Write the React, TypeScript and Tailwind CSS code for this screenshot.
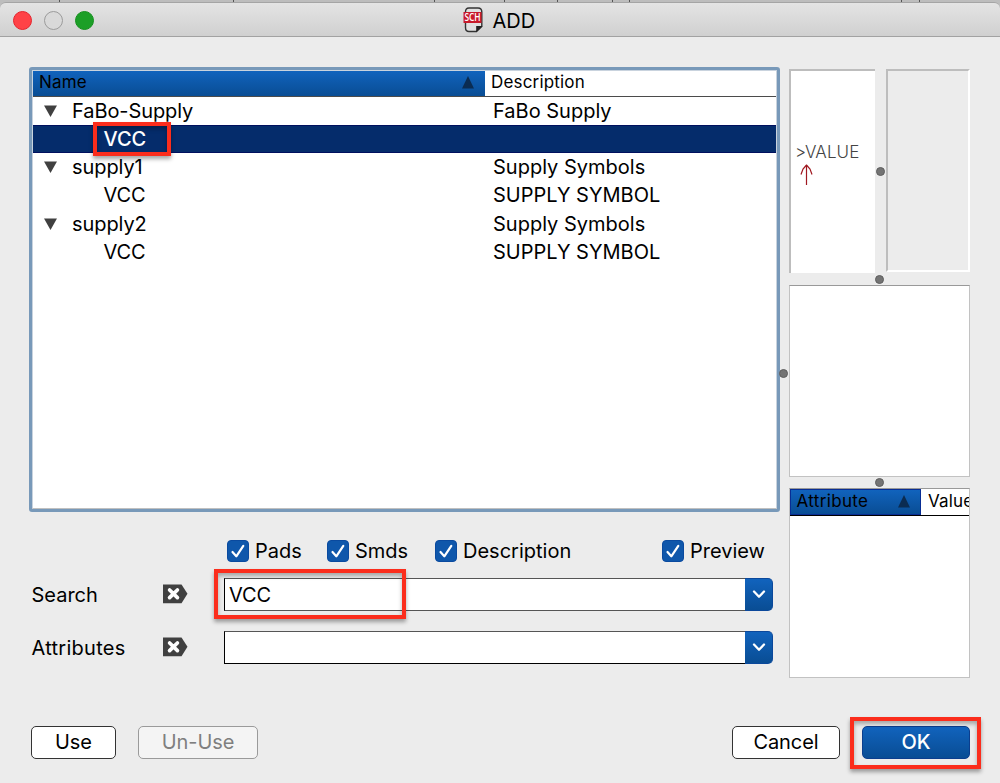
import React from "react";

const rows = [
  { name: "FaBo-Supply", desc: "FaBo Supply", group: true },
  { name: "VCC", desc: "", selected: true },
  { name: "supply1", desc: "Supply Symbols", group: true },
  { name: "VCC", desc: "SUPPLY SYMBOL" },
  { name: "supply2", desc: "Supply Symbols", group: true },
  { name: "VCC", desc: "SUPPLY SYMBOL" },
];

const ticks = [59, 233, 434, 504, 557, 612, 629, 901, 919];

function Check({ label, className }: { label: string; className: string }) {
  return (
    <label className={`flex items-center ${className}`}>
      <svg width="22" height="22" viewBox="0 0 22 22" className="mr-[6px] shrink-0">
        <rect x="0.5" y="0.5" width="21" height="21" rx="3.5" fill="#0f57ab" stroke="#0a4a9f" />
        <path d="M5.5 12 L9.3 16.3 L16.3 5.8" fill="none" stroke="#fff" strokeWidth="2.2" strokeLinecap="round" strokeLinejoin="round" />
      </svg>
      <span className="whitespace-nowrap tracking-[0px]">{label}</span>
    </label>
  );
}

function ClearIcon() {
  return (
    <svg width="25" height="20" viewBox="0 0 25 20" className="-mt-px">
      <path d="M0 0.5 H18.5 L24.5 9.7 L18.5 19.2 H0 Z" fill="#404040" />
      <path d="M6.6 6 L14.4 13.6 M14.4 6 L6.6 13.6" stroke="#fff" strokeWidth="3.7" strokeLinecap="round" />
    </svg>
  );
}

function Combo({ value, bottom }: { value: string; bottom: string }) {
  return (
    <div className="flex h-[33px] w-[549px]">
      <div className={`flex flex-1 items-center border-y border-l border-t-[#555] border-l-black bg-white pl-[4px] ${bottom}`}>
        {value}
      </div>
      <div className="flex w-7 items-center justify-center rounded-r-[5px] border border-l-0 border-[#0b489b] bg-linear-to-b from-[#1163bd] to-[#094d94]">
        <svg width="14" height="9" viewBox="0 0 14 9">
          <path d="M2 1.5 L7 6.7 L12 1.5" fill="none" stroke="#fff" strokeWidth="2.3" strokeLinecap="round" strokeLinejoin="round" />
        </svg>
      </div>
    </div>
  );
}

function SortMark({ className }: { className: string }) {
  return (
    <svg width="12" height="13" viewBox="0 0 12 13" className={className}>
      <path d="M6 0 L12 12.5 H0 Z" fill="#0b2c52" />
    </svg>
  );
}

function Dot({ className }: { className: string }) {
  return <div className={`absolute size-[9px] rounded-full border border-[#5e5e5e] bg-[#747474] ${className}`} />;
}

const mark = "absolute z-10 border-4 border-[#fb2d1c] shadow-[0_3px_4px_rgba(0,0,0,0.35),inset_0_3px_4px_rgba(0,0,0,0.3)]";

export default function App() {
  return (
    <div className="relative flex h-[783px] w-[1000px] flex-col overflow-hidden bg-[#ececec] font-['Inter',sans-serif] text-[20px] leading-7 tracking-[-0.08px] text-black">
      <svg width="1000" height="8" viewBox="0 0 1000 8" className="shrink-0">
        <rect width="1000" height="8" fill="#bdbdbd" />
        {ticks.map((x) => (
          <rect key={x} x={x} y="0" width="1" height="2" fill="#555" />
        ))}
      </svg>
      <header className="-mt-[6px] flex h-[35px] shrink-0 items-center rounded-t-[6px] border-t border-b border-t-[#a5a5a5] border-b-[#a2a2a2] bg-linear-to-b from-[#e4e4e4] to-[#d0d0d0]">
        <div className="mt-[2px] ml-[12.5px] flex gap-[12.3px]">
          <i className="size-[19px] rounded-full border border-[#e5242d] bg-[#ff4247]" />
          <i className="size-[19px] rounded-full border border-[#9b9b9b] bg-[#d9d9d9]" />
          <i className="size-[19px] rounded-full border border-[#16901f] bg-[#1c9f27]" />
        </div>
        <svg width="21" height="26" viewBox="0 0 21 26" className="mt-px ml-[369px]">
          <path d="M2.5 5 Q2.5 1 6 1 H15 Q18.8 1 18.8 5 V19.5 L13.5 24.5 H6 Q2.5 24.5 2.5 20.5 Z" fill="#e0e0e0" stroke="#333" strokeWidth="1.4" />
          <path d="M13.2 25 V19 H19.5 Z" fill="#222" />
          <rect x="0.5" y="5" width="18" height="11" fill="#c81a2b" />
          <text x="9.5" y="14" textAnchor="middle" fontFamily="Open Sans" fontSize="10" fontWeight="600" textLength="16" lengthAdjust="spacingAndGlyphs" fill="#fff">SCH</text>
        </svg>
        <span className="mt-[3px] ml-[8.5px]">ADD</span>
      </header>

      <main className="flex h-[641px] items-start pt-[30px] pl-[29px]">
        <section className="relative w-[751px]">
          <div className="h-[445px] rounded-[3px] border-[3px] border-[#7899b9] bg-white">
            <div className="h-full border border-b-[#c0c0c0] border-l-[#c9d3de] border-r-[#c9d3de] border-t-[#c9d3de]">
              <div className="flex h-[26px] border-b border-[#4b4b4b] text-[17px] leading-[23px] tracking-[0.18px]">
                <div className="flex w-[452px] items-start justify-between bg-linear-to-b from-[#1163bd] to-[#094d94] pr-[11px] pl-[6px]">
                  <span>Name</span>
                  <SortMark className="mt-[5px]" />
                </div>
                <span className="pl-[6px]">Description</span>
              </div>
              {rows.map((r, i) => (
                <div
                  key={i}
                  className={`flex h-[28.15px] items-center ${r.selected ? "border-y border-[#00105e] bg-[#052c6b] font-medium text-white" : ""}`}
                >
                  <div className={`flex w-[460px] items-center ${r.group ? "pl-[11px]" : "pl-[70.5px]"}`}>
                    {r.group && (
                      <svg width="13" height="12" viewBox="0 0 13 12" className="mr-[15px]">
                        <path d="M0 0.5 H13 L6.5 12 Z" fill="#404040" />
                      </svg>
                    )}
                    <span>{r.name}</span>
                  </div>
                  <span className="tracking-[0px]">{r.desc}</span>
                </div>
              ))}
            </div>
          </div>
          <div className={`${mark} top-[55px] left-[64px] h-[34px] w-[78px]`} />

          <div className="mt-[25px] flex h-7 items-center">
            <Check label="Pads" className="ml-[198px] w-[100px]" />
            <Check label="Smds" className="w-[108px]" />
            <Check label="Description" className="w-[227px]" />
            <Check label="Preview" className="" />
          </div>
          <div className="mt-[13px] flex h-[33px] items-center">
            <span className="w-[134px] pl-[2.5px] tracking-[0px]">Search</span>
            <span className="w-[61px]"><ClearIcon /></span>
            <Combo value="VCC" bottom="border-b-[#555]" />
          </div>
          <div className="mt-5 flex h-[33px] items-center">
            <span className="w-[134px] pl-[2.5px] tracking-[0.27px]">Attributes</span>
            <span className="w-[61px]"><ClearIcon /></span>
            <Combo value="" bottom="border-b-black" />
          </div>
          <div className={`${mark} top-[502px] left-[185px] h-[50px] w-[192px]`} />
          <Dot className="top-[302px] left-[750px]" />
        </section>

        <aside className="relative ml-[9px] mt-[2px] w-[181px]">
          <div className="flex gap-[11px]">
            <div className="h-[204px] w-[86px] border-t-2 border-l-2 border-[#bdbdbd] bg-white pl-[4px] pt-[70px]">
              <div className="h-[22px] text-[17px] font-light leading-[22px] tracking-[0.1px] text-[#444]">&gt;VALUE</div>
              <svg width="14" height="23" viewBox="0 0 14 23" className="ml-[4px]">
                <path d="M7.5 1.5 V22 M7.5 2 L4 6 L2 11.5 M7.5 2 L11 6 L13 11.5" fill="none" stroke="#a01820" strokeWidth="1.2" />
              </svg>
            </div>
            <div className="h-[203px] w-[84px] border-2 border-t-[#bdbdbd] border-r-white border-b-white border-l-[#bdbdbd]" />
          </div>
          <div className="mt-[12px] h-[192px] border border-[#c2c2c2] border-t-[#999] bg-white" />
          <div className="mt-[11px] h-[190px] border border-[#c2c2c2] border-t-[#999] bg-white">
            <div className="flex h-[27px] overflow-hidden border-b border-black text-[17px] leading-[26px] tracking-[0.18px]">
              <div className="flex w-[131px] shrink-0 items-start justify-between border border-[#082d94] bg-linear-to-b from-[#1163bd] to-[#094d94] pr-[10px] pl-[5.5px] leading-[23px] tracking-[0.35px]">
                <span>Attribute</span>
                <SortMark className="mt-[5px]" />
              </div>
              <span className="pl-[7px] leading-[25px]">Value</span>
            </div>
          </div>
          <Dot className="top-[98px] left-[87px]" />
          <Dot className="top-[206px] left-[86px]" />
          <Dot className="top-[409px] left-[86px]" />
        </aside>
      </main>

      <footer className="relative flex pt-[48px] pl-[31px] leading-[30px]">
        <button className="h-[33px] w-[85px] rounded-[5px] border border-[#333] bg-white pb-px">Use</button>
        <button className="ml-[22px] h-[33px] w-[120px] rounded-[5px] border border-[#9a9a9a] bg-[#f4f4f4] pb-px text-[#7f7f7f]">Un-Use</button>
        <button className="ml-[474px] h-[33px] w-[108px] rounded-[5px] border border-[#333] bg-white pb-px">Cancel</button>
        <button className="ml-[22px] h-[33px] w-[108px] rounded-[5px] border border-[#0b3e8e] bg-linear-to-b from-[#1163bd] to-[#094d94] pb-px font-medium text-white">OK</button>
        <div className={`${mark} top-[39px] left-[850px] h-[52px] w-[131px]`} />
      </footer>
    </div>
  );
}
